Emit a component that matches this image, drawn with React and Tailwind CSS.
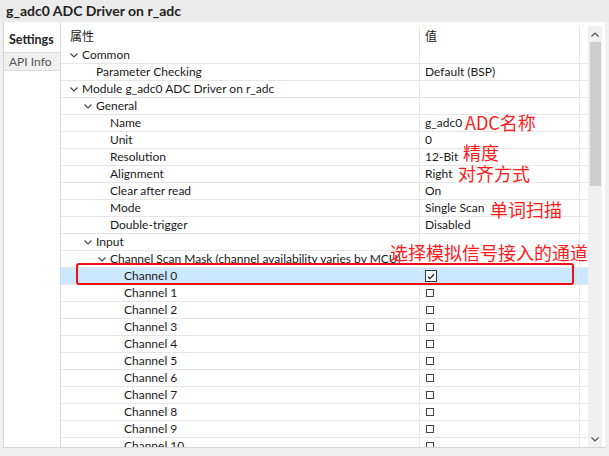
import React from 'react';

const rows = [
  { label: 'Common', level: 0, open: true },
  { label: 'Parameter Checking', level: 1, value: 'Default (BSP)' },
  { label: 'Module g_adc0 ADC Driver on r_adc', level: 0, open: true },
  { label: 'General', level: 1, open: true },
  { label: 'Name', level: 2, value: 'g_adc0' },
  { label: 'Unit', level: 2, value: '0' },
  { label: 'Resolution', level: 2, value: '12-Bit' },
  { label: 'Alignment', level: 2, value: 'Right' },
  { label: 'Clear after read', level: 2, value: 'On' },
  { label: 'Mode', level: 2, value: 'Single Scan' },
  { label: 'Double-trigger', level: 2, value: 'Disabled' },
  { label: 'Input', level: 1, open: true },
  { label: 'Channel Scan Mask (channel availability varies by MCU)', level: 2, open: true },
  { label: 'Channel 0', level: 3, check: true, selected: true },
  ...Array.from({ length: 10 }, (_, i) => ({ label: `Channel ${i + 1}`, level: 3, check: false })),
];

const cjk = { fontFamily: '"Noto Sans CJK SC", sans-serif' };

function Chevron() {
  return (
    <svg width="8" height="5" viewBox="0 0 8 5" className="block">
      <path d="M0.5 0.5 L4 4 L7.5 0.5" fill="none" stroke="#404040" strokeWidth="1.1" />
    </svg>
  );
}

function CheckBox({ checked }) {
  if (checked) {
    return (
      <div className="w-[12px] h-[12px] border border-[#333] bg-white flex items-center justify-center">
        <svg width="8" height="7" viewBox="0 0 8 7">
          <path d="M1 3.8 L3 5.6 L7 1.2" fill="none" stroke="#222" strokeWidth="1.3" />
        </svg>
      </div>
    );
  }
  return <div className="w-[8px] h-[8px] border-[1.5px] border-[#444] bg-white ml-[1px]" />;
}

function Row({ row }) {
  const pad = 21 + row.level * 14;
  return (
    <div className={`flex h-[17px] border-b border-[#e6e6e6] ${row.selected ? 'bg-[#cce8ff]' : ''}`}>
      <div className="relative w-[358px] h-full flex items-center whitespace-nowrap overflow-hidden" style={{ paddingLeft: pad }}>
        {row.open && (
          <span className="absolute top-[6px]" style={{ left: pad - 12 }}>
            <Chevron />
          </span>
        )}
        <span>{row.label}</span>
      </div>
      <div className="w-[160px] h-full flex items-center pl-[5px] border-l border-[#e6e6e6]">
        {row.value}
        {row.check !== undefined && <CheckBox checked={row.check} />}
      </div>
      <div className="w-[9px] h-full border-l border-[#e6e6e6]" />
    </div>
  );
}

export default function App() {
  return (
    <div
      className="relative w-[609px] h-[456px] overflow-hidden bg-[#f0f0f0] text-[12px] text-[#1a1a1a]"
      style={{ fontFamily: 'Lato, "Noto Sans CJK SC", sans-serif' }}
    >
      <div className="h-[22px] bg-[#ebebeb] flex items-center pl-[6px] text-[14px] font-bold text-[#222] leading-none">
        g_adc0 ADC Driver on r_adc
      </div>
      <div className="flex h-[426px] ml-[3px] mr-[4px] bg-white border-b border-l border-[#d6d6d6]">
        <div className="w-[57px] pt-[6px] border-r border-[#d6d6d6] shrink-0">
          <div className="h-[24px] flex items-center pl-[5px] font-bold text-[12.5px] text-[#222] bg-white">Settings</div>
          <div className="h-[19px] flex items-center pl-[5px] text-[#555] bg-[#f0f0f0] border-y border-[#dcdcdc]">API Info</div>
        </div>
        <div className="flex-1 flex flex-col pt-[4px]">
          <div className="flex flex-1 overflow-hidden">
            <div className="w-[527px] overflow-hidden">
              <div className="flex h-[21px]">
                <div className="w-[358px] pl-[9px] pt-[2px]">属性</div>
                <div className="w-[160px] pl-[5px] pt-[2px] border-l border-[#e6e6e6]">值</div>
                <div className="w-[9px] border-l border-[#e6e6e6]" />
              </div>
              {rows.map((r) => (
                <Row key={r.label} row={r} />
              ))}
            </div>
            <div className="w-[14px] bg-[#f0f0f0] flex flex-col items-center">
              <div className="h-[16px] flex items-center justify-center">
                <svg width="8" height="5" viewBox="0 0 8 5">
                  <path d="M0.5 4.5 L4 1 L7.5 4.5" fill="none" stroke="#555" strokeWidth="1.2" />
                </svg>
              </div>
              <div className="w-[11px] h-[144px] bg-[#cdcdcd]" />
              <div className="flex-1" />
              <div className="h-[16px] flex items-center justify-center">
                <svg width="8" height="5" viewBox="0 0 8 5">
                  <path d="M0.5 0.5 L4 4 L7.5 0.5" fill="none" stroke="#555" strokeWidth="1.2" />
                </svg>
              </div>
            </div>
          </div>
        </div>
      </div>

      {/* red annotations */}
      <div className="absolute left-[76px] top-[263px] w-[498px] h-[22px] border-2 border-[#ee1111] rounded-[3px]" />
      <div className="absolute left-[465px] top-[112px] text-[18px] leading-[20px] text-[#ff1a1a]" style={cjk}>ADC名称</div>
      <div className="absolute left-[463px] top-[142px] text-[18px] leading-[20px] text-[#ff1a1a]" style={cjk}>精度</div>
      <div className="absolute left-[458px] top-[163px] text-[18px] leading-[20px] text-[#ff1a1a]" style={cjk}>对齐方式</div>
      <div className="absolute left-[490px] top-[199px] text-[18px] leading-[20px] text-[#ff1a1a]" style={cjk}>单词扫描</div>
      <div className="absolute left-[390px] top-[242px] text-[18px] leading-[20px] text-[#ff1a1a] whitespace-nowrap" style={cjk}>选择模拟信号接入的通道</div>
    </div>
  );
}
